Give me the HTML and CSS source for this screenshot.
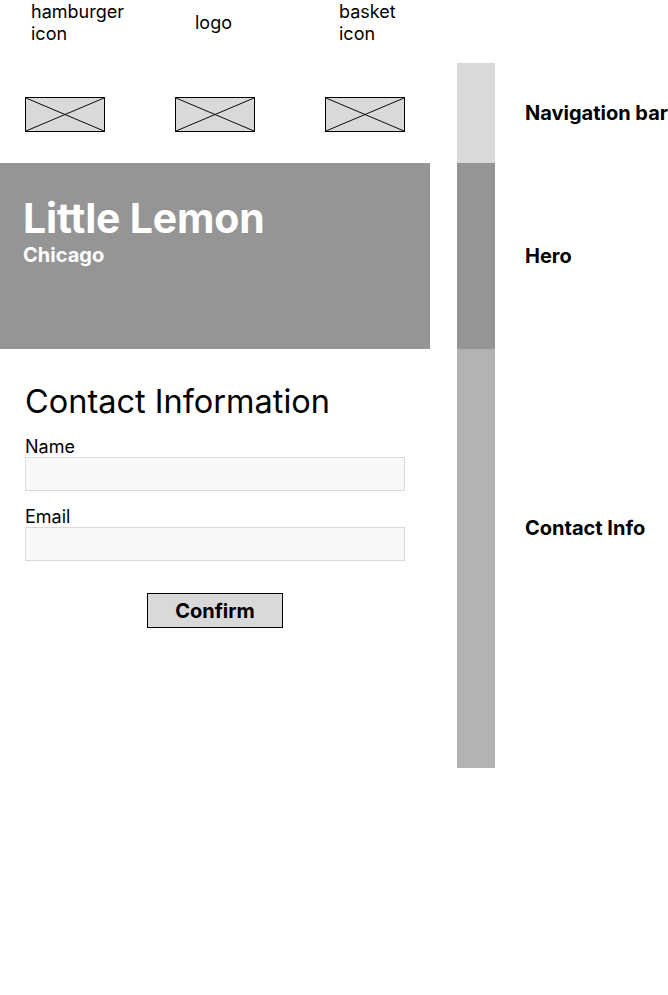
FILE: index.html
```html
<!DOCTYPE html>
<html lang="en">
<head>
<meta charset="utf-8">
<title>Little Lemon – Contact wireframe</title>
<link rel="stylesheet" href="styles.css">
</head>
<body>
<div class="board">
  <div class="top-labels">
    <span class="tl tl-ham">hamburger<br>icon</span>
    <span class="tl tl-logo">logo</span>
    <span class="tl tl-basket">basket<br>icon</span>
  </div>

  <nav class="nav">
    <div class="ph"><svg viewBox="0 0 80 35" preserveAspectRatio="none"><line x1="0" y1="0" x2="80" y2="35"/><line x1="0" y1="35" x2="80" y2="0"/></svg></div>
    <div class="ph"><svg viewBox="0 0 80 35" preserveAspectRatio="none"><line x1="0" y1="0" x2="80" y2="35"/><line x1="0" y1="35" x2="80" y2="0"/></svg></div>
    <div class="ph"><svg viewBox="0 0 80 35" preserveAspectRatio="none"><line x1="0" y1="0" x2="80" y2="35"/><line x1="0" y1="35" x2="80" y2="0"/></svg></div>
  </nav>

  <section class="hero">
    <h1 class="hero-title">Little Lemon</h1>
    <p class="hero-sub">Chicago</p>
  </section>

  <section class="contact">
    <h2 class="contact-title">Contact Information</h2>
    <label class="field">
      <span class="field-label">Name</span>
      <span class="field-input"></span>
    </label>
    <label class="field">
      <span class="field-label">Email</span>
      <span class="field-input"></span>
    </label>
    <div class="actions"><button class="btn" type="button">Confirm</button></div>
  </section>

  <div class="seg seg-nav"></div>
  <div class="seg seg-hero"></div>
  <div class="seg seg-contact"></div>

  <div class="note note-nav">Navigation bar</div>
  <div class="note note-hero">Hero</div>
  <div class="note note-contact">Contact Info</div>
</div>
</body>
</html>
```

FILE: styles.css
```css
* { box-sizing: border-box; }
html, body { margin: 0; padding: 0; background: #fff; }
body {
  font-family: Inter, "Noto Sans", "Liberation Sans", sans-serif;
  color: #000;
  overflow: hidden;
}
.board {
  display: grid;
  grid-template-columns: 430px 27px 38px 30px 143px;
  grid-template-rows: 63px 100px 186px 419px;
  width: 668px;
}
.top-labels {
  grid-column: 1 / 2;
  grid-row: 1;
  display: flex;
  align-items: center;
  padding-left: 31px;
  padding-bottom: 17px;
  font-size: 18px;
  line-height: 22px;
}
.tl-ham { width: 164px; }
.tl-logo { width: 144px; }

.nav {
  grid-column: 1;
  grid-row: 2;
  display: flex;
  gap: 70px;
  padding: 34px 0 0 25px;
}
.ph {
  width: 80px;
  height: 35px;
  background: #d9d9d9;
  border: 1px solid #000;
}
.ph svg { display: block; width: 100%; height: 100%; }
.ph line { stroke: #000; stroke-width: 1; }

.hero {
  grid-column: 1;
  grid-row: 3;
  background: #959595;
  color: #fff;
  padding: 30px 23px 0;
}
.hero-title {
  margin: 0;
  font-size: 41px;
  font-weight: 700;
  line-height: 50px;
  letter-spacing: -0.2px;
}
.hero-sub {
  margin: 0;
  font-size: 20px;
  font-weight: 700;
  line-height: 24px;
}

.contact {
  grid-column: 1;
  grid-row: 4;
  padding: 33px 25px 0;
}
.contact-title {
  margin: 0 0 14px;
  font-size: 32.5px;
  font-weight: 400;
  line-height: 40px;
}
.field { display: block; margin-bottom: 15px; }
.field-label {
  display: block;
  font-size: 18px;
  line-height: 21px;
}
.field-input {
  display: block;
  height: 34px;
  width: 380px;
  background: #f8f8f8;
  border: 1px solid #d9d9d9;
}
.actions {
  width: 380px;
  display: flex;
  justify-content: center;
  padding-top: 17px;
}
.btn {
  width: 136px;
  height: 35px;
  background: #d9d9d9;
  border: 1px solid #000;
  border-radius: 0;
  font-family: inherit;
  font-size: 20px;
  font-weight: 700;
  color: #000;
  padding: 0;
}

.seg { grid-column: 3; }
.seg-nav { grid-row: 2; background: #d9d9d9; }
.seg-hero { grid-row: 3; background: #959595; }
.seg-contact { grid-row: 4; background: #b3b3b3; }

.note {
  grid-column: 5;
  font-size: 20px;
  font-weight: 700;
  white-space: nowrap;
  align-self: center;
}
.note-nav { grid-row: 2; }
.note-hero { grid-row: 3; }
.note-contact { grid-row: 4; align-self: start; padding-top: 167px; }
```
